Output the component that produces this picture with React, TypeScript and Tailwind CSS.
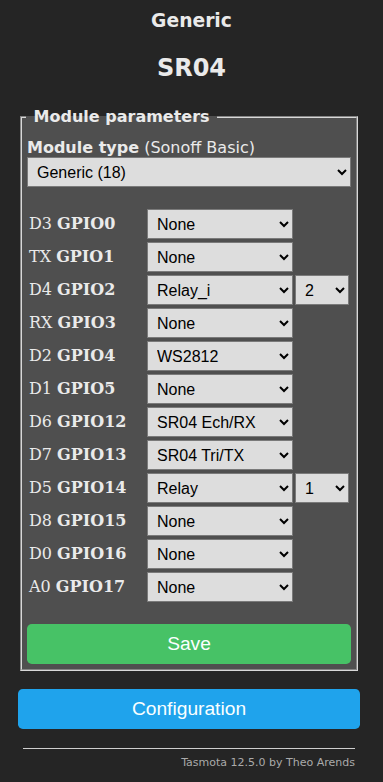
import React from "react";

type Row = { pin: string; gpio: string; value: string; index?: string };

const rows: Row[] = [
  { pin: "D3", gpio: "GPIO0", value: "None" },
  { pin: "TX", gpio: "GPIO1", value: "None" },
  { pin: "D4", gpio: "GPIO2", value: "Relay_i", index: "2" },
  { pin: "RX", gpio: "GPIO3", value: "None" },
  { pin: "D2", gpio: "GPIO4", value: "WS2812" },
  { pin: "D1", gpio: "GPIO5", value: "None" },
  { pin: "D6", gpio: "GPIO12", value: "SR04 Ech/RX" },
  { pin: "D7", gpio: "GPIO13", value: "SR04 Tri/TX" },
  { pin: "D5", gpio: "GPIO14", value: "Relay", index: "1" },
  { pin: "D8", gpio: "GPIO15", value: "None" },
  { pin: "D0", gpio: "GPIO16", value: "None" },
  { pin: "A0", gpio: "GPIO17", value: "None" },
];

const selectCls =
  "h-[30px] border border-[#7a7a7a] bg-[#dddddd] px-[5px] text-[16px] leading-[18px] text-black font-['Liberation_Sans',Arial,sans-serif]";

export default function App() {
  return (
    <div className="min-h-screen bg-[#252525] text-[#eaeaea] font-['DejaVu_Sans',Verdana,sans-serif]">
      <div className="pt-[10px] text-center">
        <h3 className="text-[18.72px] font-bold leading-[22px]">Generic</h3>
        <h2 className="mt-[22px] text-[24px] font-bold leading-[28px]">SR04</h2>
      </div>

      <fieldset className="ml-[20px] mt-[26px] w-[338px] border-2 [border-style:groove] border-[#d8d8d8] bg-[#4f4f4f] px-[5px] pb-[5px]">
        <legend className="ml-[-1px] px-[2px] text-[16px] font-bold leading-[18px]">
          &nbsp;Module parameters&nbsp;
        </legend>
        <div className="mt-[12px] text-[16px] leading-[19px]">
          <b>Module type</b> (Sonoff Basic)
        </div>
        <select className={selectCls + " w-full"} defaultValue="g">
          <option value="g">Generic (18)</option>
        </select>

        <div className="mt-[22px] flex flex-col gap-[3px]">
          {rows.map((r) => (
            <div key={r.gpio} className="flex items-center gap-[2px] pl-[2px]">
              <span className="w-[116px] text-[16px] leading-[20px] font-['DejaVu_Serif',serif]">
                {r.pin} <b>{r.gpio}</b>
              </span>
              <select className={selectCls + " w-[146px]"} defaultValue="v">
                <option value="v">{r.value}</option>
              </select>
              {r.index && (
                <select className={selectCls + " w-[54px]"} defaultValue="i">
                  <option value="i">{r.index}</option>
                </select>
              )}
            </div>
          ))}
        </div>

        <button className="mt-[22px] h-[40px] w-full rounded-[4.8px] bg-[#47c266] text-[19.2px] text-[#faffff] font-['Liberation_Sans',Arial,sans-serif]">
          Save
        </button>
      </fieldset>

      <button className="ml-[18px] mt-[18px] h-[40px] w-[342px] rounded-[4.8px] bg-[#1fa3ec] text-[19.2px] text-[#faffff] font-['Liberation_Sans',Arial,sans-serif]">
        Configuration
      </button>

      <div className="ml-[23px] mt-[19px] w-[332px] text-right">
        <hr className="border-0 border-t border-[#cfcfcf]" />
        <div className="mt-[6px] text-[11px] text-[#aaaaaa]">Tasmota 12.5.0 by Theo Arends</div>
      </div>
    </div>
  );
}
